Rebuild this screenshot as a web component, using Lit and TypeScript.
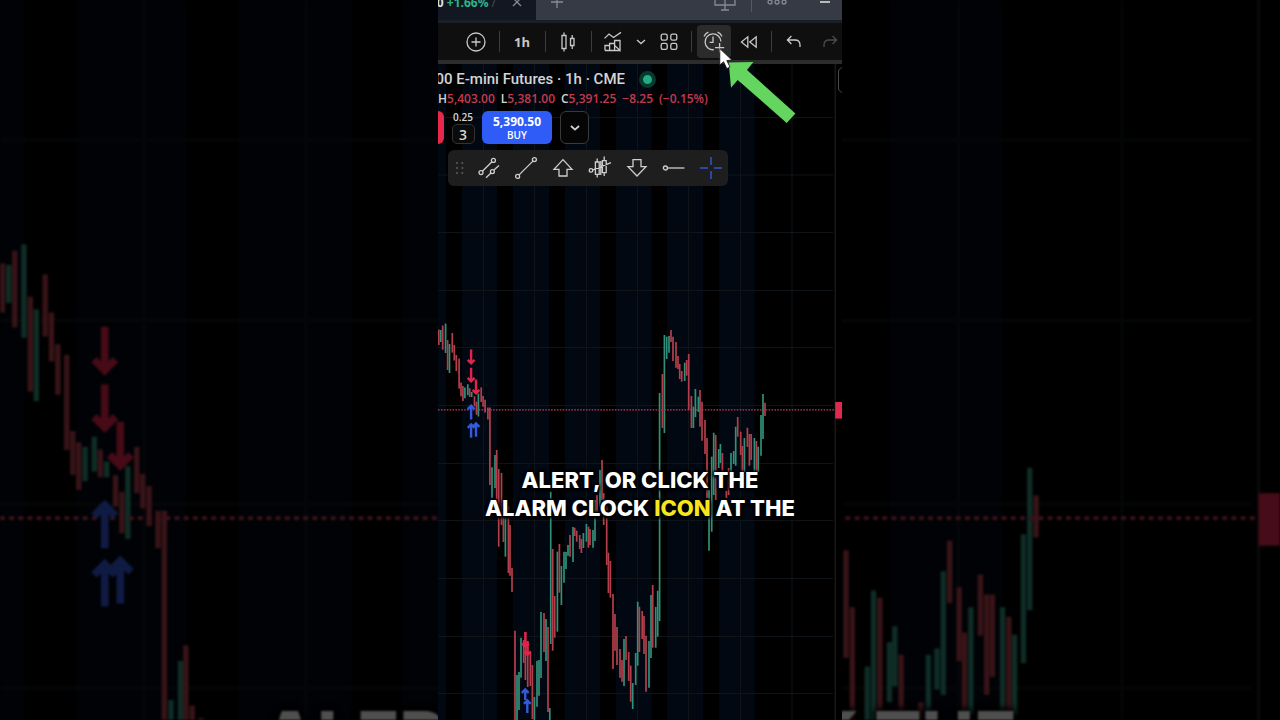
import { LitElement, html, css, svg } from "lit";
import { customElement, property } from "lit/decorators.js";

type Bar = [number, number, number, 0 | 1];

// x, high, low, rising
const BARS: Bar[] = [
  [438.8, 329.5, 345, 0], [440.8, 330, 342, 1], [442.7, 325.5, 349.7, 0], [445.6, 323.5, 353, 1],
  [447.6, 340, 370, 0], [449.5, 344, 373, 1], [452.3, 333, 352.6, 0], [454.3, 345, 360.5, 0],
  [456.3, 355, 371, 0], [459.1, 358.4, 388.4, 0], [461, 382.4, 396.3, 0], [462.9, 386, 401, 0],
  [464.9, 387.4, 398.2, 1], [467.8, 384.2, 395.2, 1], [469.7, 388.2, 397, 0], [471.7, 392, 397, 1],
  [474.5, 396.3, 406.3, 0], [476.5, 401.6, 414.7, 0], [478.4, 393.5, 416.5, 1], [481.2, 387.4, 402, 0],
  [483.1, 396, 406.8, 0], [485.1, 399.8, 412.4, 0], [487.9, 407.6, 419.4, 0], [489.9, 407.6, 485, 0],
  [492, 467.3, 498, 1], [495, 455, 488, 1], [496.7, 450, 499, 0], [498.7, 469, 546.7, 0],
  [501.5, 473, 525, 0], [503.4, 500, 542, 0], [505.4, 504, 556.7, 1], [508.4, 506, 573, 0],
  [510, 525, 575.7, 0], [512, 568, 592, 0], [515, 630.7, 720, 0], [517, 675, 720, 1],
  [519, 672, 710, 1], [521, 637.7, 677.7, 1], [523.7, 640, 663, 0], [525.4, 632, 680, 0],
  [527.7, 641, 687, 0], [530.4, 653, 686, 0], [532.4, 665, 719, 0], [534.4, 697, 720, 1],
  [537, 660.7, 706.7, 1], [539, 660, 695.7, 1], [541, 612, 678, 1], [544, 613, 652, 0],
  [546, 619, 661, 1], [548, 627, 712, 0], [549.8, 708, 720, 1], [550.7, 491.7, 644, 1],
  [552.7, 549, 650.7, 0], [554.7, 596, 637.7, 0], [557.4, 551.7, 631.7, 1], [559.4, 544, 592.7, 0],
  [561.4, 566, 605, 1], [564, 551.7, 582.7, 1], [566, 552, 569, 1], [568, 545, 555.7, 1],
  [570, 535, 556.7, 0], [573, 527, 562, 1], [574.7, 527.7, 536, 0], [576.7, 530.7, 541.7, 0],
  [579.7, 535, 549, 0], [581.4, 539, 553, 0], [583.4, 533, 548, 1], [586.4, 524, 541.7, 1],
  [588.4, 526.7, 547.7, 0], [590, 529, 545, 0], [593, 530, 547.7, 1], [595, 500, 541, 1],
  [597, 495, 512, 0], [600, 470, 507, 1], [602, 460, 500, 0], [603.7, 493, 525, 0],
  [606.7, 505, 565, 0], [608.4, 552.7, 593, 0], [610.4, 561, 597.7, 0], [613, 594, 669, 0],
  [615, 614, 650.7, 0], [617, 627, 665, 0], [620, 649, 677.7, 0], [622, 660, 681.7, 0],
  [624, 639, 686, 1], [626, 636, 660, 0], [628.7, 652, 681, 0], [630.7, 665.7, 701.7, 0],
  [632.7, 683, 709, 1], [635.7, 653, 685, 1], [637.7, 601.7, 665.7, 1], [639.4, 606.7, 652, 0],
  [642.2, 611, 639, 0], [644, 616, 654, 0], [646, 635.7, 691.7, 0], [649, 641, 687.7, 1],
  [651, 595, 658, 1], [652.7, 585, 647.7, 0], [655.7, 607, 647.7, 1], [657.7, 590.7, 636.7, 1],
  [659.6, 393, 621, 1], [662.4, 374, 428, 0], [664.4, 335, 433, 1], [666.7, 336.7, 359, 1],
  [669, 336, 352.7, 1], [671, 330, 342, 0], [673, 336.7, 361, 0], [676, 342, 367.7, 0],
  [678, 356, 369, 0], [679.7, 364, 379, 0], [681.7, 371, 381.7, 0], [684.7, 362.7, 381, 1],
  [686.7, 360, 375.7, 0], [688.7, 354, 410, 0], [691.4, 396, 428, 0], [693.4, 406.7, 428, 1],
  [695.4, 389, 417, 1], [698.4, 396.7, 412, 1], [700, 390, 426.7, 0], [702, 401.7, 440.7, 0],
  [705, 420, 454, 0], [707, 438, 498, 0], [709, 490, 550.7, 1], [711.7, 456.7, 531.7, 1],
  [713.7, 432.7, 495, 1], [715.7, 435, 500, 0], [718.7, 449, 468, 1], [720.4, 444, 463, 1],
  [722.4, 453, 472, 0], [726.4, 491, 498, 0], [728.6, 468, 495, 0], [731, 453, 472, 1],
  [733.7, 451, 464, 1], [735.7, 426.7, 465.7, 1], [737.7, 417, 436.7, 0], [740.7, 431.7, 455, 0],
  [742.4, 446, 472, 0], [744.4, 438, 472, 1], [747.4, 427.7, 447, 0], [749.4, 434, 465.7, 0],
  [751.2, 434, 460, 0], [754.4, 438, 472, 1], [756.4, 441, 472, 0], [758.2, 446.7, 472, 1],
  [761, 415, 455.7, 1], [763, 394, 439, 1], [765, 402.7, 416, 0],
];

const SESSIONS: [number, number][] = [
  [438, 446], [462, 497], [513, 549], [565, 600], [616, 651.5], [667, 703], [719, 754.5],
];
const GRID_X = [483.5, 534.5, 586.5, 637.5, 688.5, 740.5, 792];
const GRID_Y = [117.5, 175, 232.5, 290.5, 347.5, 405.5, 463.5, 520.5, 578.5, 636.5, 693.5];

// x, top, bottom
const SELLS: [number, number, number][] = [
  [471.1, 349.5, 364.5], [471.1, 367.7, 382.5], [476, 379.5, 394.5], [525.4, 632, 648], [527.5, 641, 656],
];
const BUYS: [number, number, number][] = [
  [471.1, 404.6, 419.4], [471.1, 423.2, 437.8], [476, 422.2, 436.8], [525.2, 688.3, 700], [527.3, 699.3, 713],
];

@customElement("price-chart")
class PriceChart extends LitElement {
  @property() view = "438 64 404 656";

  static styles = css`
    :host { display: block; }
    .plot { display: block; width: 100%; height: 100%; }
    .session { fill: #020812; }
    .grid { stroke: #0f1418; stroke-width: 1; }
    .axis { stroke: #242424; stroke-width: 1; }
    .bar { stroke-width: 1.7; }
    .up { stroke: #309079; }
    .down { stroke: #b43f4c; }
    .last { stroke: #c23a54; stroke-width: 1.2; stroke-dasharray: 1.6 1.3; }
    .tag { fill: #e0294e; }
    .sell, .buy { fill: none; stroke-width: 2.4; }
    .sell { stroke: #e0244a; }
    .buy { stroke: #3459dc; }
  `;

  render() {
    return html`<svg class="plot" viewBox=${this.view} preserveAspectRatio="xMidYMin slice" aria-hidden="true">
      <rect x="438" y="0" width="404" height="720" fill="#000"></rect>
      ${SESSIONS.map(([a, b]) => svg`<rect class="session" x=${a} y="0" width=${b - a} height="720"></rect>`)}
      ${GRID_X.map((x) => svg`<path class="grid" d="M${x} 0V720"></path>`)}
      ${GRID_Y.map((y) => svg`<path class="grid" d="M438 ${y}H833"></path>`)}
      <path class="axis" d="M835.2 0V720"></path>
      ${BARS.map(([x, a, b, up]) => svg`<path class="bar ${up ? "up" : "down"}" d="M${x} ${a}V${b}"></path>`)}
      <path class="last" d="M438 409.9H834"></path>
      <rect class="tag" x="835.2" y="402" width="8" height="16.6"></rect>
      ${SELLS.map(([x, a, b]) => svg`<path class="sell" d="M${x} ${a}V${b - 1}M${x - 3.4} ${b - 4.6}L${x} ${b - 1.2}L${x + 3.4} ${b - 4.6}"></path>`)}
      ${BUYS.map(([x, a, b]) => svg`<path class="buy" d="M${x} ${b}V${a + 1}M${x - 3.4} ${a + 4.6}L${x} ${a + 1.2}L${x + 3.4} ${a + 4.6}"></path>`)}
    </svg>`;
  }
}

const icon = (w: number, h: number, body: unknown) =>
  html`<svg class="icon" width=${w} height=${h} viewBox="0 0 ${w} ${h}" aria-hidden="true">${body}</svg>`;

const closeIcon = icon(10, 10, svg`<path d="M1 1L9 9M9 1L1 9"></path>`);
const addIcon = icon(14, 14, svg`<path d="M7 1V13M1 7H13"></path>`);
const screenIcon = icon(24, 18, svg`<path d="M2 1H22V12H2ZM12 7V17M8 17H16"></path>`);
const dotsIcon = icon(20, 6, svg`<circle cx="3" cy="3" r="2"></circle><circle cx="10" cy="3" r="2"></circle><circle cx="17" cy="3" r="2"></circle>`);
const minimizeIcon = icon(12, 4, svg`<path d="M1 2H11" stroke-width="1.6"></path>`);

const compareIcon = icon(22, 22, svg`<circle cx="11" cy="11" r="9"></circle><path d="M11 6.5V15.5M6.5 11H15.5"></path>`);
const candlesIcon = icon(20, 22, svg`<path d="M4 4.5H8V17.5H4ZM6 1.5V4.5M6 17.5V20.5M12.5 7.5H16V14.5H12.5ZM14.2 4V7.5M14.2 14.5V18"></path>`);
const indicatorsIcon = icon(22, 22, svg`<path d="M2.5 7.4L7 3L11.5 6.5L19 1.4M3 19.5V14.5H7.6V19.5M7.6 14.5V12.5H12.6V19.5M12.6 14.5V9.5H18V19.5ZM18 19.5H3"></path>`);
const chevronIcon = icon(12, 8, svg`<path d="M2 2L6 5.6L10 2"></path>`);
const layoutIcon = icon(20, 20, svg`<rect x="2.2" y="2.2" width="6" height="6" rx="1.6"></rect><rect x="11.8" y="2.2" width="6" height="6" rx="1.6"></rect><rect x="2.2" y="11.4" width="6" height="6" rx="1.6"></rect><rect x="11.8" y="11.4" width="6" height="6" rx="1.6"></rect>`);
const alarmIcon = icon(24, 24, svg`<path d="M17.6 13V22.4M13 17.6H22.2M11.8 19.7A7.9 7.9 0 1 1 18.9 11.6M11 6.6V12.4H7.6M2 6.4Q3.4 3.4 6.4 2.2M15.6 2.2Q18.6 3.4 20 6.4"></path>`);
const rewindIcon = icon(20, 16, svg`<path d="M9.8 2.8V13.2L3.4 8ZM18.2 2.8V13.2L11.8 8Z"></path>`);
const undoIcon = icon(18, 16, svg`<path d="M6.4 2L2.4 6L6.4 10M2.6 6H10Q15 6 15 11V13"></path>`);
const redoIcon = icon(18, 16, svg`<path d="M11.6 2L15.6 6L11.6 10M15.4 6H8Q3 6 3 11V13"></path>`);

const gripIcon = icon(10, 14, svg`<g fill="#5c5c5c" stroke="none"><circle cx="2" cy="2" r="1"></circle><circle cx="7.4" cy="2" r="1"></circle><circle cx="2" cy="7" r="1"></circle><circle cx="7.4" cy="7" r="1"></circle><circle cx="2" cy="12" r="1"></circle><circle cx="7.4" cy="12" r="1"></circle></g>`);
const TOOLS: [string, unknown][] = [
  ["Parallel channel", icon(24, 24, svg`<circle cx="4" cy="16.6" r="2"></circle><circle cx="16.4" cy="4.4" r="2"></circle><path d="M5.4 15.2L15 5.8M9 21.8L14 17M16.9 14.1L22 9.4"></path><circle cx="15.4" cy="15.6" r="2"></circle>`)],
  ["Trend line", icon(24, 24, svg`<circle cx="3.6" cy="20.4" r="2"></circle><circle cx="20.4" cy="3.6" r="2"></circle><path d="M5.1 18.9L18.9 5.1"></path>`)],
  ["Arrow up", icon(24, 24, svg`<path d="M12 3.6L21 13.4H16V20H8V13.4H3Z"></path>`)],
  ["Bars pattern", icon(24, 24, svg`<circle cx="3" cy="14.4" r="1.8"></circle><path d="M4.8 14L23 6.6M7.4 6H11.2V18.4H7.4ZM9.2 2.4V6M9.2 18.4V21.6M14.4 4.6H18.2V16.6H14.4ZM16.2 .6V4.6M16.2 16.6V20M12.8 5V19"></path>`)],
  ["Arrow down", icon(24, 24, svg`<path d="M12 20L21 10.6H16V3.6H8V10.6H3Z"></path>`)],
  ["Horizontal ray", icon(24, 24, svg`<circle cx="3.4" cy="12" r="2"></circle><path d="M5.4 12H22.4"></path>`)],
  ["Cross", icon(24, 24, svg`<path stroke="#2f55d4" stroke-width="1.5" d="M12 1V9M12 15V23M1 12H9M15 12H23"></path>`)],
];

@customElement("app-root")
class AppRoot extends LitElement {
  static styles = css`
    :host {
      display: grid;
      justify-items: center;
      position: relative;
      height: 100vh;
      overflow: hidden;
      background: #000;
      font-family: "Open Sans", "Noto Sans", sans-serif;
      color: #d4d4d4;
    }
    * { box-sizing: border-box; }
    button, input { font: inherit; color: inherit; margin: 0; padding: 0; border: 0; background: none; }
    button { display: flex; align-items: center; justify-content: center; flex: none; }
    .icon { display: block; flex: none; fill: none; stroke: currentColor; stroke-width: 1.3; overflow: visible; }

    .backdrop { position: absolute; inset: 0; opacity: 0.31; filter: blur(1px); overflow: hidden; }
    .backdrop price-chart { height: 100%; }

    .caption {
      position: absolute;
      left: 0;
      right: 0;
      margin: 0;
      text-align: center;
      white-space: nowrap;
      font-family: Inter, "Open Sans", sans-serif;
      font-weight: 800;
      color: #fff;
    }
    .front { top: 466px; font-size: 22px; line-height: 28px; text-shadow: 0 0 2px #000, 0 0 3px #000, 0 0 3px #000, 1px 2px 3px #000, -1px 2px 3px #000, 0 -1px 3px #000; }
    .large { top: 693px; font-size: 70px; line-height: 88px; text-shadow: 0 0 5px #000, 0 0 6px #000, 0 0 8px #000, 0 0 8px #000; }
    .word { color: #f8e71c; }

    .stage {
      position: relative;
      display: flex;
      flex-direction: column;
      height: 100vh;
      aspect-ratio: 404 / 720;
      overflow: hidden;
      background: #000;
    }
    .tabs { display: flex; align-items: flex-end; height: 20px; background: #363a45; overflow: hidden; color: #868a93; flex: none; }
    .tab { display: flex; align-items: center; justify-content: flex-end; gap: 16px; width: 98px; height: 36px; padding-right: 14px; background: #131722; flex: none; }
    .quote { font-size: 12px; font-weight: 700; white-space: nowrap; color: #e0e0e0; }
    .gain { color: #2cb58b; }
    .slash { color: #4a4e58; font-weight: 400; }
    .tab-tools { display: flex; align-items: center; flex: 1; height: 36px; padding: 0 11px 0 14px; }
    .spread { flex: 1; }
    .tab-rule { width: 1px; height: 20px; margin: 0 15px 0 14px; background: #555963; }
    .minimize { margin-left: 32px; color: #d8d8d8; }

    .toolbar {
      display: flex;
      align-items: center;
      flex: none;
      height: 44px;
      padding-left: 21px;
      background: #0f0f0f;
      border-top: 3px solid #1b1f28;
      border-bottom: 4px solid #2c2c2c;
      color: #c9c9c9;
      overflow: hidden;
    }
    .tool { width: 34px; height: 33px; border-radius: 4px; }
    .narrow { width: 24px; }
    .mid { width: 32px; }
    .interval { font-size: 13px; font-weight: 700; }
    .active { background: #2b2b2b; }
    .faded { color: #4c4c4c; width: 38px; }
    .rule { width: 12px; height: 21px; flex: none; display: flex; justify-content: center; }
    .rule::before { content: ""; width: 1px; background: #3c3c3c; }

    .chart { position: relative; flex: 1; min-height: 0; }
    .plot { position: absolute; inset: 0; }
    .legend { position: relative; display: flex; flex-direction: column; align-items: flex-start; padding-top: 5px; }
    .symbol { display: flex; align-items: center; gap: 14px; height: 20px; }
    .name { display: flex; justify-content: flex-end; width: 187px; margin: 0; overflow: hidden; font-family: Roboto, sans-serif; font-size: 15px; line-height: 20px; font-weight: 500; white-space: nowrap; }
    .status { width: 17px; height: 17px; border-radius: 50%; background: #22ab85; border: 4px solid #063a2c; }
    .prices { display: flex; gap: 6px; font-size: 12px; line-height: 20px; font-weight: 600; white-space: nowrap; }
    .loss { color: #c43a4c; }
    .trade { display: flex; align-items: stretch; height: 33px; margin-top: 2px; }
    .sell { width: 6px; background: #e8274f; border-radius: 0 6px 6px 0; }
    .size { display: flex; flex-direction: column; align-items: center; justify-content: space-between; width: 38px; font-size: 10px; line-height: 12px; font-weight: 600; }
    .count { width: 23px; height: 20px; border: 1px solid #333; border-radius: 5px; background: #0b0b0b; text-align: center; font-size: 14px; }
    .buy { flex-direction: column; width: 70px; border-radius: 6px; background: #2f5cf6; color: #fff; font-size: 12px; line-height: 15px; font-weight: 700; }
    .side { font-size: 10px; line-height: 13px; font-weight: 600; }
    .more { width: 29px; margin-left: 8px; border: 1px solid #3a3a3a; border-radius: 6px; background: #050505; }
    .more .icon { stroke-width: 1.8; }
    .drawing { display: flex; align-items: center; width: 280px; height: 36px; margin: 6px 0 0 10px; padding-left: 7px; border-radius: 6px; background: #1e1e1e; color: #cfcfcf; }
    .draw { width: 37px; height: 36px; }
    .grip { margin-right: 5px; }
    .side-button { position: absolute; left: 400px; top: 3px; width: 30px; height: 26px; border: 1px solid #484848; border-radius: 5px; }
    .pointer { position: absolute; left: 280px; top: 46px; }
  `;

  render() {
    return html`
      <div class="backdrop" aria-hidden="true">
        <price-chart view="438 246.4 404 227.2"></price-chart>
        <p class="caption large">ALERT, OR CLICK THE</p>
      </div>
      <main class="stage">
        <div class="tabs">
          <div class="tab">
            <span class="quote">0 <span class="gain">+1.66%</span> <span class="slash">/</span></span>
            <button aria-label="Close tab">${closeIcon}</button>
          </div>
          <div class="tab-tools">
            <button aria-label="New tab">${addIcon}</button>
            <span class="spread"></span>
            <button aria-label="Screens">${screenIcon}</button>
            <span class="tab-rule"></span>
            <button aria-label="Menu">${dotsIcon}</button>
            <button class="minimize" aria-label="Minimize">${minimizeIcon}</button>
          </div>
        </div>
        <div class="toolbar">
          <button class="tool" aria-label="Compare">${compareIcon}</button>
          <span class="rule"></span>
          <button class="tool interval">1h</button>
          <span class="rule"></span>
          <button class="tool" aria-label="Candles">${candlesIcon}</button>
          <span class="rule"></span>
          <button class="tool mid" aria-label="Indicators">${indicatorsIcon}</button>
          <button class="tool narrow" aria-label="Favorite indicators">${chevronIcon}</button>
          <button class="tool mid" aria-label="Layouts">${layoutIcon}</button>
          <span class="rule"></span>
          <button class="tool active" aria-label="Create alert">${alarmIcon}</button>
          <button class="tool" aria-label="Replay">${rewindIcon}</button>
          <span class="rule"></span>
          <button class="tool" aria-label="Undo">${undoIcon}</button>
          <button class="tool faded" aria-label="Redo">${redoIcon}</button>
        </div>
        <section class="chart">
          <price-chart class="plot"></price-chart>
          <div class="legend">
            <div class="symbol">
              <h1 class="name">00 E-mini Futures · 1h · CME</h1>
              <span class="status"></span>
            </div>
            <div class="prices">
              <span>H<span class="loss">5,403.00</span></span>
              <span>L<span class="loss">5,381.00</span></span>
              <span>C<span class="loss">5,391.25</span></span>
              <span class="loss">−8.25</span>
              <span class="loss">(−0.15%)</span>
            </div>
            <div class="trade">
              <button class="sell" aria-label="Sell"></button>
              <label class="size">0.25<input class="count" .value=${"3"} /></label>
              <button class="buy"><span>5,390.50</span><span class="side">BUY</span></button>
              <button class="more" aria-label="More">${chevronIcon}</button>
            </div>
            <div class="drawing">
              <span class="grip">${gripIcon}</span>
              ${TOOLS.map(([name, glyph]) => html`<button class="draw" aria-label=${name}>${glyph}</button>`)}
            </div>
          </div>
          <button class="side-button" aria-label="Currency"></button>
        </section>
        <svg class="pointer" width="80" height="80" viewBox="718 46 80 80" aria-hidden="true">
          <path fill="#64d660" d="M728.7 62.4L753.4 62L747 70L795.4 113.4L786.7 123L737.7 80L731 87.8Z"></path>
          <path fill="#fff" stroke="#111" stroke-width=".8" d="M719.8 48.6V65L723.6 61.8L726.8 68.6L730 67L726.8 60.6L731.8 60Z"></path>
        </svg>
        <p class="caption front">ALERT, OR CLICK THE<br />ALARM CLOCK <span class="word">ICON</span> AT THE</p>
      </main>
    `;
  }
}
